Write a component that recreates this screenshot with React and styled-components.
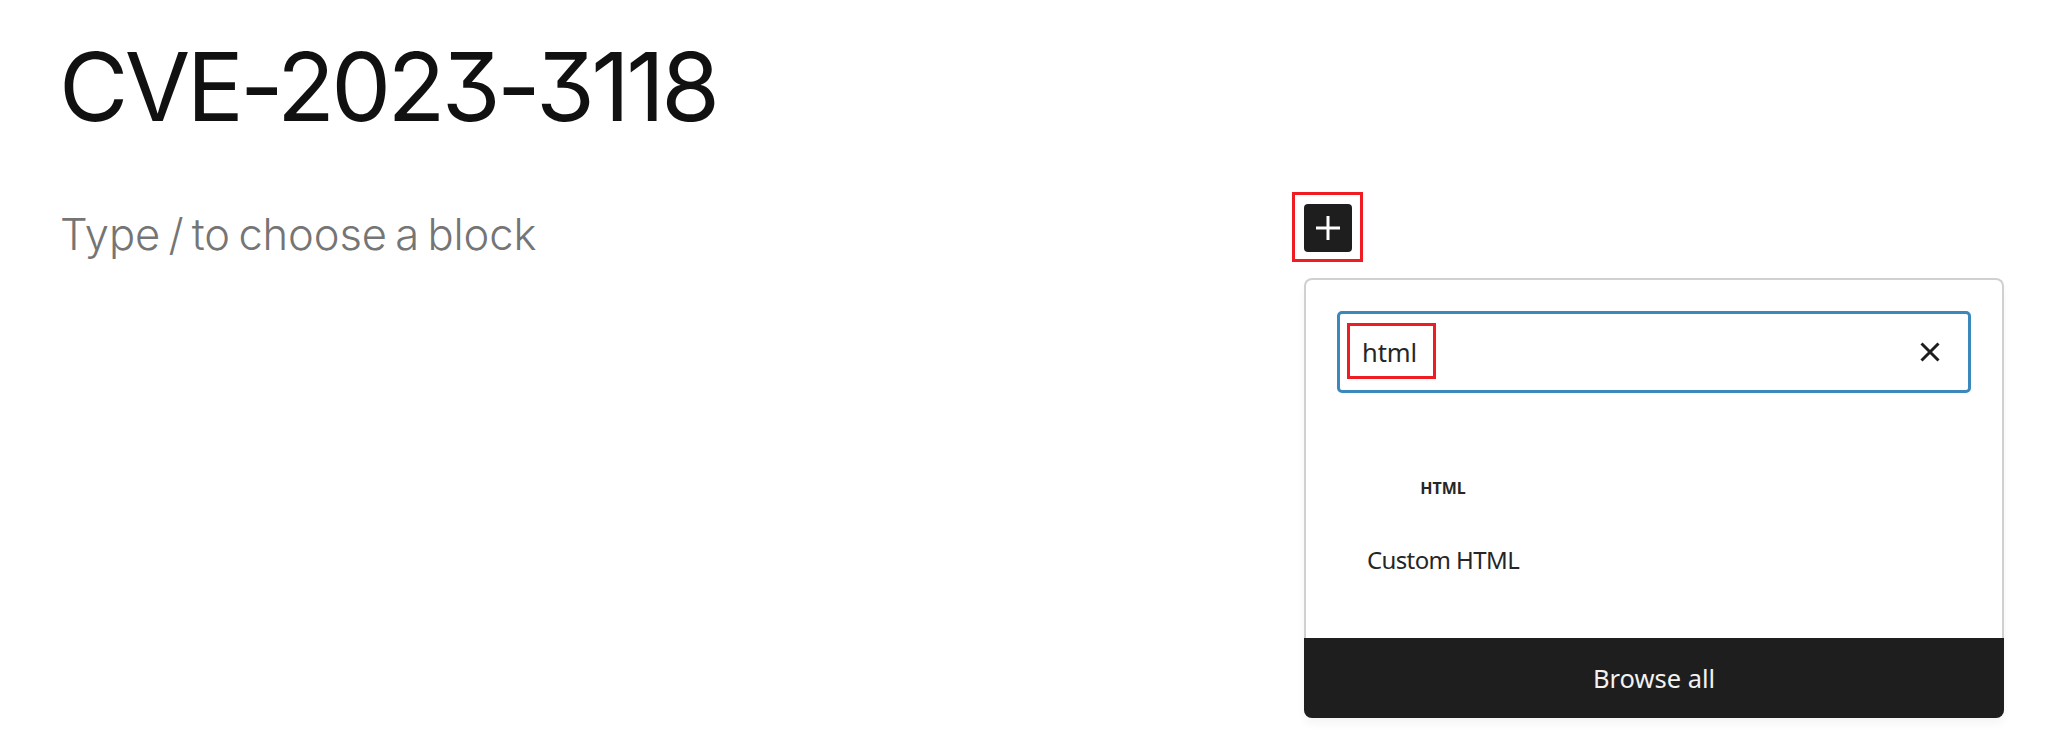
import React from 'react';
import styled, { createGlobalStyle } from 'styled-components';

const GlobalStyle = createGlobalStyle`
  * { box-sizing: border-box; }
  body { margin: 0; background: #fff; color: #262626; font-family: "Noto Sans", sans-serif; }
  button { font: inherit; }
`;
const Editor = styled.main`
  display: grid;
  grid-template-columns: 1304px 700px;
  height: 744px;
  overflow: hidden;
`;
const Content = styled.section`
  padding: 28px 0 0 59px;
  font-family: Inter, sans-serif;
`;
const Title = styled.h1`
  margin: 0;
  font-size: 95px;
  line-height: 118px;
  font-weight: 370;
  letter-spacing: -3.65px;
  color: #111;
  white-space: nowrap;
  font-feature-settings: "cv09" 1;
`;
const Placeholder = styled.p`
  margin: 60px 0 0 1px;
  font-size: 43.5px;
  line-height: 56px;
  font-weight: 280;
  letter-spacing: -0.1px;
  word-spacing: -3.8px;
  color: #757575;
  white-space: nowrap;
`;
const Inserter = styled.aside`
  padding-top: 204px;
`;
const AddButton = styled.button`
  position: relative;
  display: flex;
  align-items: center;
  justify-content: center;
  width: 48px;
  height: 48px;
  padding: 0 1px 1px 0;
  border: 0;
  border-radius: 4px;
  color: #fff;
  background: #1e1e1e;
`;
const Highlight = styled.span`
  position: absolute;
  inset: ${p => p.$inset};
  border: 3px solid #ef1c24;
  pointer-events: none;
`;
const Popover = styled.div`
  display: flex;
  flex-direction: column;
  width: 700px;
  height: 440px;
  margin-top: 26px;
  border: 2px solid #d0d0d0;
  border-bottom: 0;
  border-radius: 8px;
  box-shadow: 0 6px 10px rgba(0, 0, 0, 0.045);
`;
const Search = styled.div`
  position: relative;
  display: flex;
  align-items: center;
  justify-content: space-between;
  height: 82px;
  margin: 31px 31px 0;
  padding: 0 28px 0 22px;
  border: 3px solid #3b88bd;
  border-radius: 5px;
`;
const Label = styled.span`
  font-size: ${p => p.$size || 25.5}px;
  line-height: 34px;
  font-weight: ${p => p.$weight || 400};
  letter-spacing: ${p => p.$spacing || 0}px;
  white-space: nowrap;
`;
const BlockType = styled.div`
  display: flex;
  flex-direction: column;
  align-items: center;
  width: 212px;
  margin: 78px 0 0 31px;
  gap: 38px;
`;
const BrowseAll = styled.button`
  height: 80px;
  margin: auto -2px 0;
  border: 0;
  border-radius: 0 0 8px 8px;
  color: #f2f2f2;
  background: #1e1e1e;
`;

export default function App() {
  return (
    <>
      <GlobalStyle />
      <Editor>
        <Content>
          <Title>CVE-2023-3118</Title>
          <Placeholder>Type / to choose a block</Placeholder>
        </Content>
        <Inserter>
          <AddButton aria-label="Add block">
            <svg width="24" height="24" viewBox="0 0 24 24" stroke="currentColor" strokeWidth="3"><path d="M12 0V24M0 12H24" /></svg>
            <Highlight $inset="-12px -11px -10px -12px" />
          </AddButton>
          <Popover>
            <Search>
              <Label $spacing={-0.1}>html</Label>
              <svg width="20" height="20" viewBox="0 0 20 20" stroke="#1e1e1e" strokeWidth="3"><path d="M1.5 1.5L18.5 18.5M18.5 1.5L1.5 18.5" /></svg>
              <Highlight $inset="9px 532px 11px 7px" />
            </Search>
            <BlockType>
              <Label $size={16} $weight={700}>HTML</Label>
              <Label $size={24} $spacing={-0.6}>Custom HTML</Label>
            </BlockType>
            <BrowseAll><Label>Browse all</Label></BrowseAll>
          </Popover>
        </Inserter>
      </Editor>
    </>
  );
}
